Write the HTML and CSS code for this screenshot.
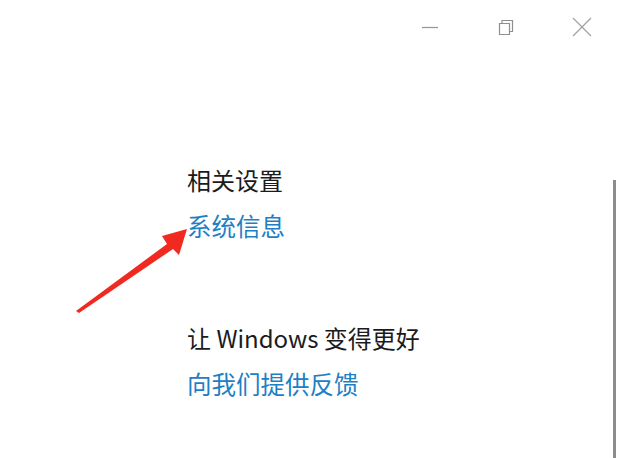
FILE: index.html
```html
<!DOCTYPE html>
<html lang="zh-CN">
<head>
  <meta charset="UTF-8">
  <meta name="viewport" content="width=device-width, initial-scale=1.0">
  <title>关于</title>
  <link rel="stylesheet" href="styles.css">
</head>
<body>
  <div class="window">
    <div class="titlebar">
      <button class="caption-btn" aria-label="最小化">
        <svg width="18" height="18" viewBox="0 0 18 18"><path d="M1 9.5h16" stroke="#9a9a9a" stroke-width="1.3" fill="none"/></svg>
      </button>
      <button class="caption-btn" aria-label="还原">
        <svg width="18" height="18" viewBox="0 0 18 18">
          <path d="M2.5 5.5h10v11h-10z" stroke="#8f8f8f" stroke-width="1.2" fill="none"/>
          <path d="M5 5.5v-3h10.5v11h-3" stroke="#8f8f8f" stroke-width="1.2" fill="none"/>
        </svg>
      </button>
      <button class="caption-btn" aria-label="关闭">
        <svg width="20" height="20" viewBox="0 0 20 20"><path d="M1 1l18 18M19 1L1 19" stroke="#a0a0a0" stroke-width="1.2" fill="none"/></svg>
      </button>
    </div>

    <div class="content">
      <div class="section">
        <div class="section-title">相关设置</div>
        <a class="link" href="#">系统信息</a>
      </div>
      <div class="section">
        <div class="section-title">让 Windows 变得更好</div>
        <a class="link" href="#">向我们提供反馈</a>
      </div>
    </div>

    <div class="scrollbar"></div>

    <!-- red annotation arrow pointing at the link -->
    <svg class="arrow" width="620" height="458" viewBox="0 0 620 458">
      <polygon points="76,311 167,244 162,236 187,229 179,255 173,249 79,313" fill="#f02a20"/>
    </svg>
  </div>
</body>
</html>
```

FILE: styles.css
```css
body {
  margin: 0;
  background: #fff;
  font-family: "Noto Sans CJK SC", "Noto Sans", sans-serif;
}

.window {
  position: relative;
  width: 620px;
  height: 458px;
  overflow: hidden;
  background: #fff;
}

.titlebar {
  display: flex;
  justify-content: flex-end;
  padding: 17px 18px 0 0;
  gap: 36px;
}

.caption-btn {
  background: none;
  border: none;
  padding: 0;
  width: 40px;
  height: 20px;
  display: flex;
  align-items: center;
  justify-content: center;
}

.content {
  padding: 126px 0 0 187px;
  display: flex;
  flex-direction: column;
  gap: 78px;
}

.section {
  display: flex;
  flex-direction: column;
  gap: 12px;
}

.section-title {
  font-size: 24px;
  line-height: 34px;
  color: #1b1b1b;
}

.link {
  font-size: 24.5px;
  line-height: 34px;
  color: #1d80c4;
  text-decoration: none;
}

.scrollbar {
  position: absolute;
  left: 613px;
  top: 180px;
  width: 3px;
  height: 278px;
  background: #8c8c8c;
}

.arrow {
  position: absolute;
  left: 0;
  top: 0;
  pointer-events: none;
}
```
